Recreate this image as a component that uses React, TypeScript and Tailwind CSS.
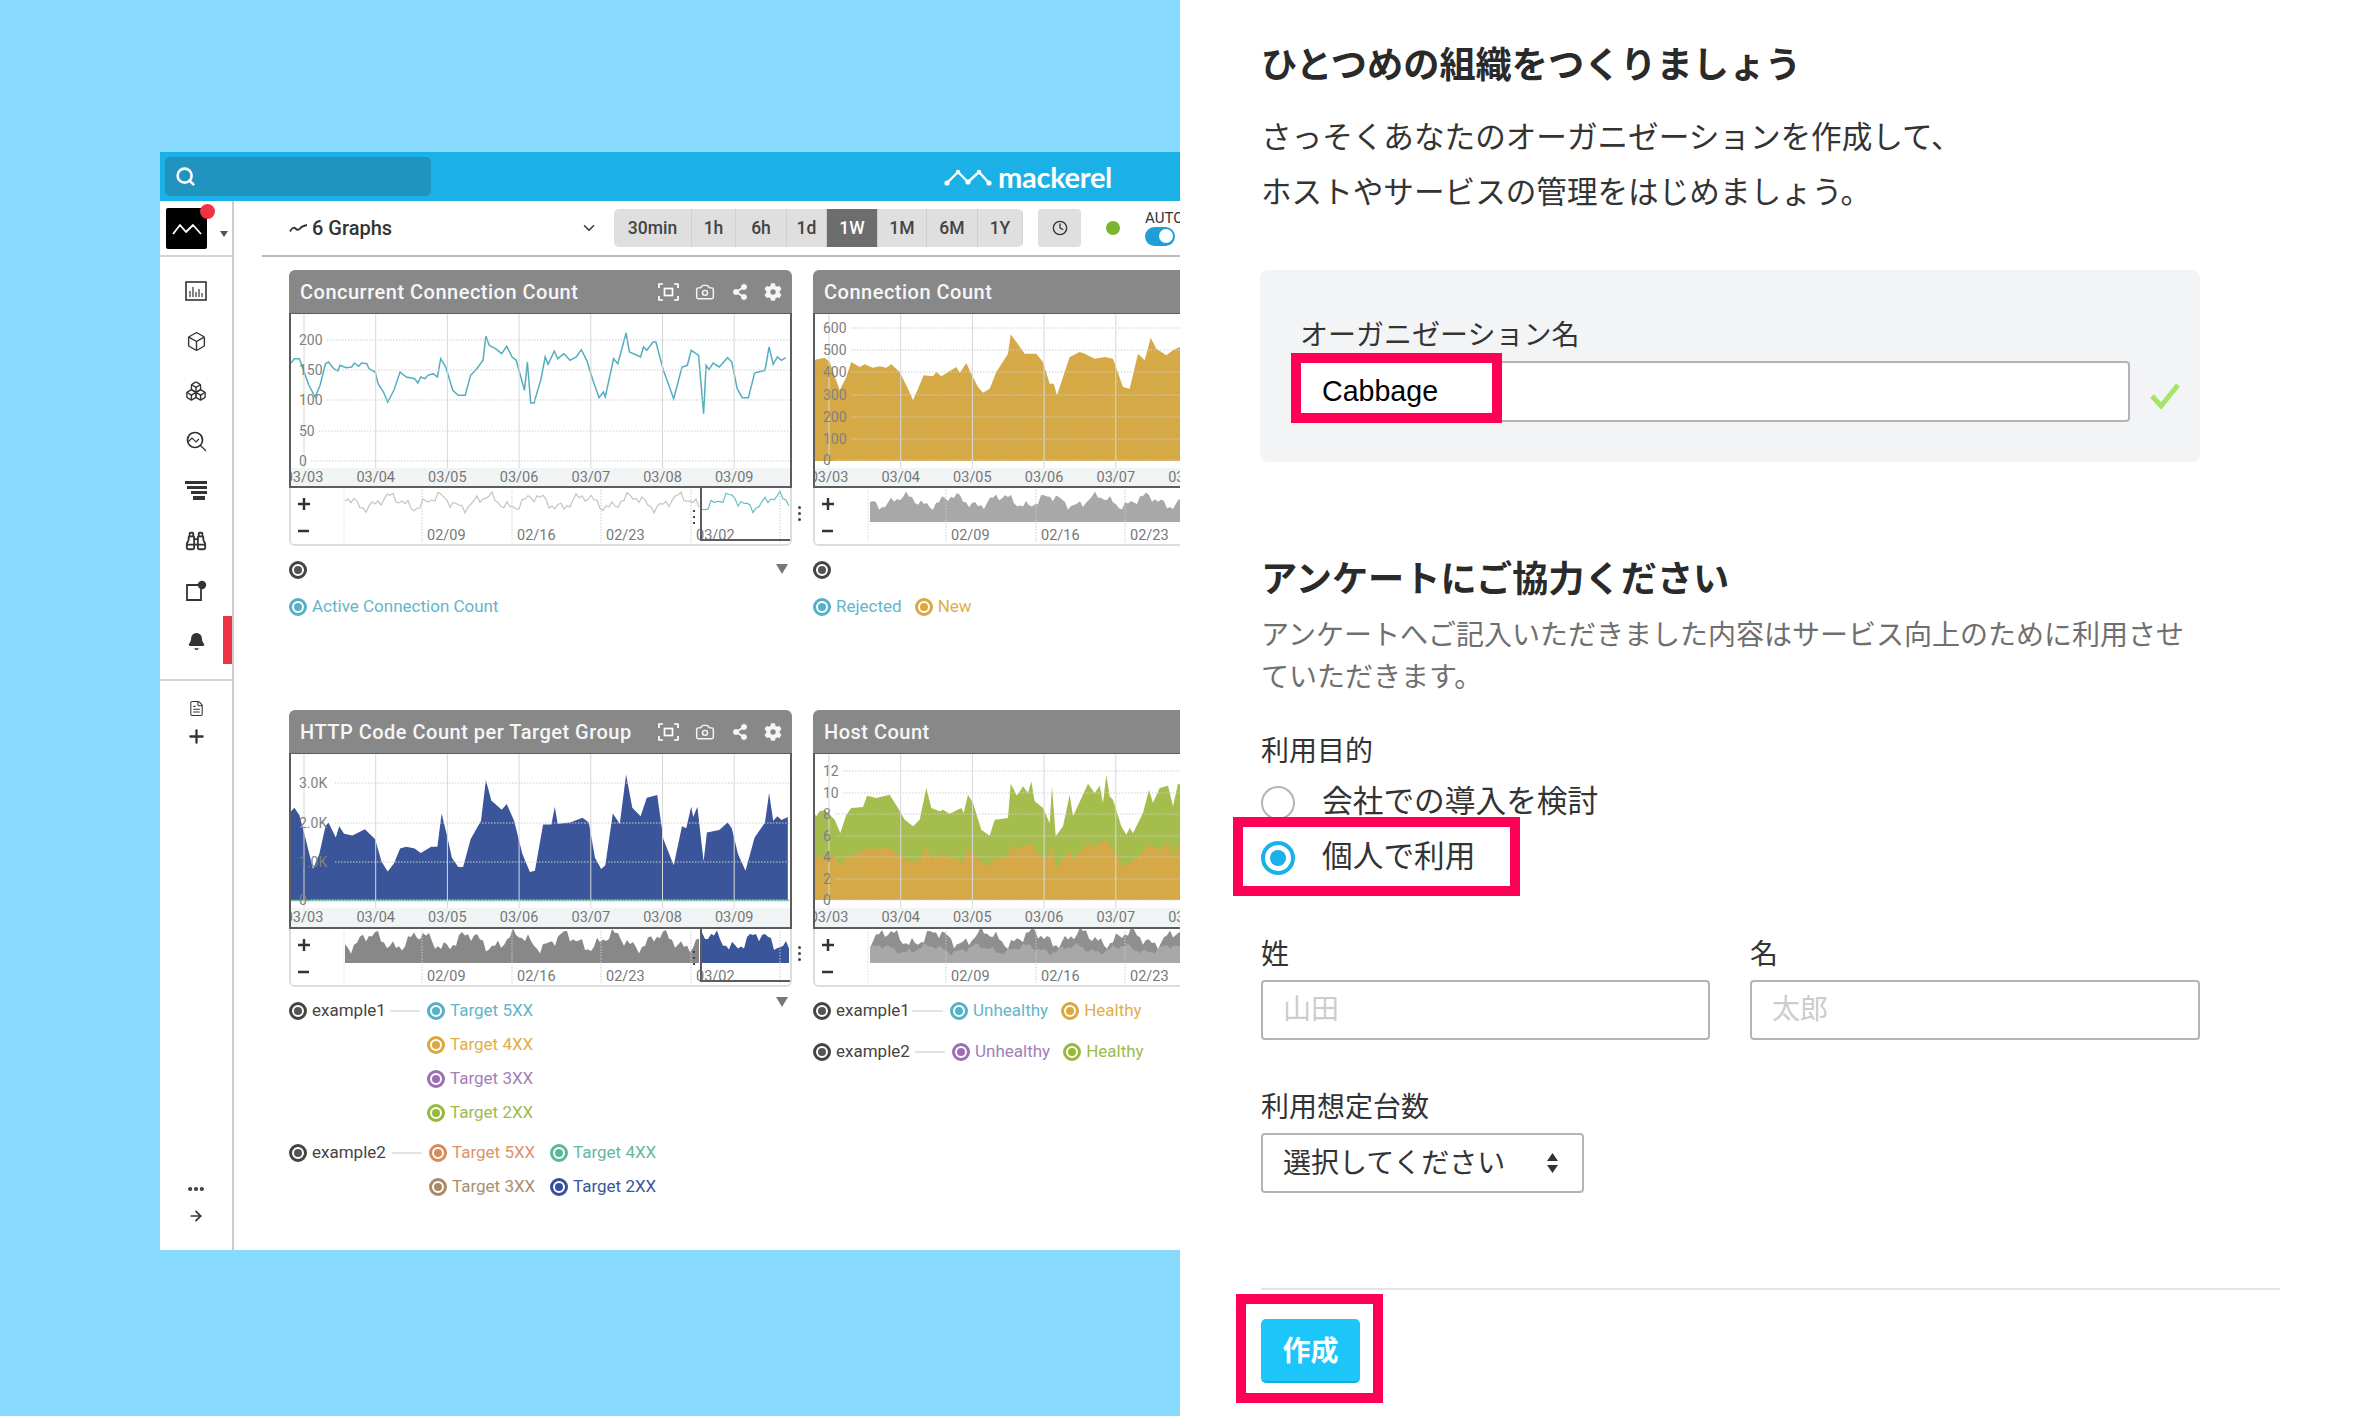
import React from "react";
import { Search, ChevronDown, Clock, Box, Boxes, Binoculars, Bell, FileText, Plus, Ellipsis, ArrowRight, Camera } from "lucide-react";
import { FaCog, FaShareAlt } from "react-icons/fa";

type P = [number, number];
const L = (arr: number[]): P[] => { const o: P[] = []; for (let i = 0; i < arr.length; i += 2) o.push([arr[i], arr[i + 1]]); return o; };

const c1 = L([340,670,350,655,362,655,372,690,385,735,400,770,412,735,425,670,432,665,445,685,455,692,460,675,475,682,488,680,495,668,505,678,512,668,525,670,530,685,545,695,552,730,565,755,575,785,590,750,605,695,620,710,640,715,648,728,655,710,665,715,672,705,685,700,695,710,703,655,715,680,732,750,745,765,762,765,775,705,790,685,805,660,812,588,820,615,835,625,850,640,862,618,875,650,885,660,905,750,912,665,920,788,928,788,945,715,955,650,962,672,977,632,985,655,1000,640,1015,660,1030,650,1042,628,1055,660,1070,720,1085,772,1095,755,1100,770,1120,655,1130,670,1150,578,1158,635,1185,650,1192,620,1200,630,1215,605,1222,605,1240,690,1265,775,1285,680,1298,675,1307,630,1325,645,1337,820,1343,675,1350,688,1360,668,1375,680,1395,652,1405,665,1418,745,1430,772,1445,772,1460,698,1485,690,1495,620,1505,672,1515,650,1525,660,1535,652]);
const c3 = L([337,360,350,345,362,365,375,420,395,510,410,470,425,395,432,385,450,425,458,395,470,415,490,420,520,403,545,430,560,490,575,517,590,495,605,455,620,450,640,455,655,467,680,450,695,450,705,360,718,420,730,480,745,505,757,505,775,430,800,380,812,270,825,325,850,350,862,335,880,380,900,470,918,518,930,515,950,390,970,390,978,342,985,388,1015,385,1045,372,1060,385,1075,480,1090,510,1100,500,1118,360,1135,388,1150,255,1165,345,1185,368,1200,318,1225,310,1240,430,1265,500,1285,395,1295,400,1307,342,1312,370,1322,342,1337,490,1345,412,1375,405,1395,385,1405,400,1420,470,1438,515,1460,425,1485,385,1495,305,1505,380,1515,368,1525,378,1540,370]);
const c2 = L([100,660,120,655,135,652,150,665,180,750,200,710,215,665,240,680,255,672,280,682,300,678,320,682,335,672,360,695,385,745,400,780,415,745,432,705,460,708,470,695,485,708,530,680,540,698,560,668,575,700,595,740,610,757,630,745,650,695,685,640,693,582,710,605,735,640,770,640,790,665,810,730,822,730,832,765,850,710,870,650,900,635,915,640,945,655,975,650,1000,655,1030,740,1050,745,1075,640,1095,660,1113,592,1130,625,1160,645,1180,630,1200,620,1215,622]);
const c4g = L([100,395,110,410,120,395,135,392,165,420,182,460,200,405,215,385,250,382,262,348,290,355,330,345,355,385,375,420,400,440,420,420,440,325,455,385,480,395,490,390,510,402,545,385,552,400,565,345,580,370,605,450,630,468,645,420,685,415,693,312,712,348,730,320,745,340,755,305,765,365,790,385,810,430,817,320,828,470,850,440,870,345,880,410,925,312,945,340,960,318,970,370,980,285,990,350,1000,360,1025,440,1040,465,1050,445,1060,460,1090,400,1108,330,1120,370,1140,325,1165,318,1180,380,1195,312,1215,320]);
const c4o = L([100,535,135,525,165,530,182,558,200,535,260,508,330,505,360,530,400,550,425,535,440,498,455,535,490,525,520,535,550,548,565,505,580,525,625,560,645,540,685,530,693,495,712,510,755,490,770,515,800,540,817,498,830,565,870,510,880,540,925,490,945,505,960,490,980,480,1000,510,1030,560,1060,545,1110,495,1140,510,1165,490,1180,530,1200,490,1215,495]);

const line = (pts: P[], ox: number, sx: number, oy: number, sy: number) =>
  pts.map(([x, y], i) => `${i ? "L" : "M"}${((x - ox) / sx).toFixed(1)} ${((y - oy) / sy).toFixed(1)}`).join(" ");
const area = (pts: P[], ox: number, sx: number, oy: number, sy: number, base: number) => {
  const d = line(pts, ox, sx, oy, sy);
  const last = (pts[pts.length - 1][0] - ox) / sx;
  const first = (pts[0][0] - ox) / sx;
  return `${d} L${last.toFixed(1)} ${base} L${first.toFixed(1)} ${base} Z`;
};

const sparkPts = (seed: number, x0: number, x1: number, base: number, amp: number) => {
  const o: P[] = [];
  for (let x = x0; x <= x1; x += 3) {
    const v = 0.5 + 0.28 * Math.sin(x * 0.13 + seed) + 0.17 * Math.sin(x * 0.37 + seed * 2) + 0.12 * Math.sin(x * 0.83 + seed * 3);
    o.push([x, base - amp * v]);
  }
  return o;
};
const sparkLine = (p: P[]) => p.map(([x, y], i) => `${i ? "L" : "M"}${x} ${y.toFixed(1)}`).join(" ");
const sparkArea = (p: P[], base: number) => `${sparkLine(p)} L${p[p.length - 1][0]} ${base} L${p[0][0]} ${base} Z`;

type YL = [string, number];

function Plot({ children, yl, start, h }: { children: React.ReactNode; yl: YL[]; start: number; h: number }) {
  const dates = ["03/03", "03/04", "03/05", "03/06", "03/07", "03/08", "03/09"];
  const step = 71.7;
  return (
    <svg width="503" height={h} className="block">
      <rect x="0" y="155" width="503" height={h - 155} fill="#f1f4f5" />
      {children}
      {yl.map(([t, y]) => (
        <line key={t} x1={t.length * 8 + 14} x2="503" y1={y} y2={y} stroke="#cfcfcf" strokeWidth="1.2" strokeDasharray="1.5 1.5" />
      ))}
      {dates.map((d, i) => (
        <line key={d} x1={start + i * step} x2={start + i * step} y1="0" y2="155" stroke="#d8d8d8" strokeWidth="1" />
      ))}
      {yl.map(([t, y]) => (
        <text key={t} x="10" y={y + 5} fontSize="14" fill="#808080">{t}</text>
      ))}
      {dates.map((d, i) => (
        <text key={d} x={start + i * step} y="169" fontSize="14.5" fill="#777" textAnchor="middle">{d}</text>
      ))}
      <rect x="1" y="0" width="501" height={h - 1} fill="none" stroke="#5c5c5c" strokeWidth="2" />
    </svg>
  );
}

function Overview({ children, left }: { children: React.ReactNode; left: boolean }) {
  const grid = [133, 223, 312, 402, 491];
  const labs: [string, number][] = [["02/09", 138], ["02/16", 228], ["02/23", 317], ["03/02", 407]];
  return (
    <svg width="503" height="58" className="block rounded-b-md">
      <line x1="55" x2="55" y1="2" y2="54" stroke="#e4e4e4" strokeWidth="1" strokeDasharray="2 1" />
      {children}
      {grid.map((x) => (
        <line key={x} x1={x} x2={x} y1="2" y2="54" stroke="#c9c9c9" strokeWidth="1" strokeDasharray="1.5 1.5" />
      ))}
      {labs.map(([t, x]) => (
        <text key={t} x={x} y="52" fontSize="14.5" fill="#777">{t}</text>
      ))}
      <path d="M9 16H21M15 10V22M9 43H20" stroke="#333" strokeWidth="2.5" fill="none" />
      {left && (
        <>
          <path d="M412 0V52H503" stroke="#5c5c5c" strokeWidth="2" fill="none" />
          <path d="M405 22v2M405 28v2M405 34v2" stroke="#444" strokeWidth="2" />
        </>
      )}
      <path d="M1 0V53Q1 57 5 57H498Q502 57 502 53V0" fill="none" stroke="#dcdcdc" strokeWidth="2" />
    </svg>
  );
}

function FocusIcon() {
  return (
    <svg width="21" height="18" viewBox="0 0 21 18" fill="none" stroke="white" strokeWidth="1.7">
      <path d="M1 5V1H5M16 1H20V5M20 13V17H16M5 17H1V13" />
      <rect x="6.5" y="5.5" width="8" height="7" />
    </svg>
  );
}

function Card({ title, icons, plot, over, dots }: { title: string; icons?: boolean; plot: React.ReactNode; over: React.ReactNode; dots?: boolean }) {
  return (
    <div className="relative w-[503px] shrink-0">
      <div className="flex h-[43px] items-center justify-between rounded-t-md bg-[#888888] pl-[11px] pr-[10px] pt-[1px] text-[20px] font-medium tracking-[0.5px] text-[#f6f6f6]">
        <span>{title}</span>
        {icons && (
          <div className="flex w-[124px] items-center justify-between">
            <FocusIcon />
            <Camera size={20} strokeWidth={1.7} />
            <FaShareAlt size={16} />
            <FaCog size={18} />
          </div>
        )}
      </div>
      {plot}
      {over}
      {dots && (
        <div className="absolute -right-[9px] top-[236px] flex flex-col gap-[3px]">
          <span className="h-[3px] w-[3px] rounded-full bg-[#444]" />
          <span className="h-[3px] w-[3px] rounded-full bg-[#444]" />
          <span className="h-[3px] w-[3px] rounded-full bg-[#444]" />
        </div>
      )}
    </div>
  );
}

const teal = { b: "border-[#55b1c6]", d: "bg-[#55b1c6]", t: "text-[#62b6c9]" };
const orange = { b: "border-[#dca73c]", d: "bg-[#dca73c]", t: "text-[#dfae4c]" };
const purple = { b: "border-[#9c6fb5]", d: "bg-[#9c6fb5]", t: "text-[#a27fb9]" };
const green = { b: "border-[#96b93a]", d: "bg-[#96b93a]", t: "text-[#9dbb4c]" };
const coral = { b: "border-[#d98a58]", d: "bg-[#d98a58]", t: "text-[#dc9468]" };
const mint = { b: "border-[#5ab89a]", d: "bg-[#5ab89a]", t: "text-[#63b99e]" };
const brown = { b: "border-[#a88a68]", d: "bg-[#a88a68]", t: "text-[#a98f70]" };
const navy = { b: "border-[#33509c]", d: "bg-[#33509c]", t: "text-[#3a559f]" };
const dark = { b: "border-[#444444]", d: "bg-[#555555]", t: "text-[#444444]" };
type C = typeof teal;

function Dot({ c }: { c: C }) {
  return (
    <span className={`flex h-[18px] w-[18px] shrink-0 items-center justify-center rounded-full border-[3px] bg-white ${c.b}`}>
      <span className={`h-[8px] w-[8px] rounded-full ${c.d}`} />
    </span>
  );
}
function Item({ c, t }: { c: C; t: string }) {
  return (
    <div className={`flex h-[34px] items-center gap-[5px] whitespace-nowrap text-[17px] ${c.t}`}>
      <Dot c={c} />
      <span>{t}</span>
    </div>
  );
}
const Dash = ({ w }: { w: string }) => <span className={`mt-[16px] h-[2px] shrink-0 bg-[#e3e3e3] ${w}`} />;
const Caret = () => (
  <svg width="12" height="10" viewBox="0 0 12 10" className="ml-auto mr-[4px] mt-[3px] shrink-0"><path d="M0 0H12L6 10Z" fill="#777" /></svg>
);

function SideIcon({ children, mark }: { children: React.ReactNode; mark?: boolean }) {
  return (
    <div className="relative flex h-[50px] items-center justify-center text-[#333]">
      {children}
      {mark && <span className="absolute right-0 top-0 h-[48px] w-[9px] bg-[#ee3344]" />}
    </div>
  );
}

function Sidebar() {
  return (
    <div className="flex w-[74px] shrink-0 flex-col border-r-2 border-[#cccccc]">
      <div className="relative flex h-[56px] items-start border-b-2 border-[#d5d5d5] pl-[6px] pt-[7px]">
        <div className="flex h-[41px] w-[41px] items-center justify-center rounded-[2px] bg-black">
          <svg width="30" height="14" viewBox="0 0 30 14" fill="none" stroke="white" strokeWidth="1.8" strokeLinejoin="round"><path d="M1 12L8 3L14 10L21 3L29 12" /></svg>
        </div>
        <span className="absolute left-[40px] top-[3px] h-[15px] w-[15px] rounded-full bg-[#ee3344]" />
        <svg width="8" height="6" viewBox="0 0 8 6" className="ml-[13px] mt-[23px]"><path d="M0 0H8L4 6Z" fill="#555" /></svg>
      </div>
      <div className="flex h-[424px] flex-col border-b-2 border-[#d5d5d5] pt-[9px]">
        <SideIcon>
          <svg width="22" height="20" viewBox="0 0 22 20" fill="none" stroke="#333"><rect x="1" y="1" width="20" height="18" strokeWidth="1.6" /><path d="M5 16V10M8 16V6M11 16V11M14 16V8M17 16V12" strokeWidth="1.2" /></svg>
        </SideIcon>
        <SideIcon><Box size={21} strokeWidth={1.6} /></SideIcon>
        <SideIcon><Boxes size={22} strokeWidth={1.5} /></SideIcon>
        <SideIcon>
          <svg width="22" height="22" viewBox="0 0 22 22" fill="none" stroke="#333" strokeWidth="1.7"><circle cx="10" cy="10" r="7.5" /><path d="M15.5 15.5L21 21M3 12L7 8L11 12L14 9" strokeWidth="1.2" /></svg>
        </SideIcon>
        <SideIcon>
          <svg width="22" height="20" viewBox="0 0 22 20" fill="#333"><rect x="0" y="0" width="22" height="3" /><rect x="2" y="5" width="20" height="3" /><rect x="6" y="10" width="16" height="3" /><rect x="8" y="15" width="12" height="4" /></svg>
        </SideIcon>
        <SideIcon><Binoculars size={22} strokeWidth={2} /></SideIcon>
        <SideIcon>
          <svg width="22" height="22" viewBox="0 0 22 22" fill="none"><path d="M13 5H2V20H16V9" stroke="#333" strokeWidth="1.8" /><circle cx="17" cy="5" r="4.2" fill="#333" /></svg>
        </SideIcon>
        <SideIcon mark><Bell size={19} fill="#333" strokeWidth={1.5} /></SideIcon>
      </div>
      <div className="flex flex-1 flex-col items-center text-[#333]">
        <div className="mt-[19px]"><FileText size={17} strokeWidth={1.5} /></div>
        <div className="mt-[9px]"><Plus size={21} strokeWidth={2.6} /></div>
        <div className="mt-auto"><Ellipsis size={20} strokeWidth={3} /></div>
        <div className="mb-[26px] mt-[9px]"><ArrowRight size={16} strokeWidth={2.6} /></div>
      </div>
    </div>
  );
}

function Toolbar() {
  const seg: [string, string][] = [["30min", "w-[78px]"], ["1h", "w-[44px]"], ["6h", "w-[51px]"], ["1d", "w-[40px]"], ["1W", "w-[51px]"], ["1M", "w-[49px]"], ["6M", "w-[51px]"], ["1Y", "w-[45px]"]];
  return (
    <div className="ml-[28px] flex h-[56px] items-center whitespace-nowrap border-b-2 border-[#bbbbbb]">
      <div className="flex w-[352px] shrink-0 items-center pl-[27px] pr-[16px]">
        <svg width="19" height="10" viewBox="0 0 19 10" fill="none" stroke="#333" strokeWidth="1.8"><path d="M1 8.5Q4 3 6.5 5.5T11 5.5T18 2" /></svg>
        <span className="ml-[4px] text-[20px] font-medium text-[#333]">6 Graphs</span>
        <ChevronDown size={18} strokeWidth={2} className="ml-auto text-[#333]" />
      </div>
      <div className="flex h-[38px] shrink-0 overflow-hidden rounded-[5px] bg-[#dfdfdf] text-[17.5px] font-medium text-[#444]">
        {seg.map(([t, w]) => (
          <div key={t} className={`flex items-center justify-center border-r border-[#cfcfcf] ${w} ${t === "1W" ? "bg-[#6d6d6d] text-white" : ""}`}>{t}</div>
        ))}
      </div>
      <div className="ml-[15px] flex h-[38px] w-[43px] shrink-0 items-center justify-center rounded-[4px] bg-[#dfdfdf] text-[#333]">
        <Clock size={16} strokeWidth={2} />
      </div>
      <span className="ml-[25px] h-[14px] w-[14px] shrink-0 rounded-full bg-[#7ab52f]" />
      <div className="ml-[25px] flex shrink-0 flex-col items-start">
        <span className="text-[15px] leading-[15px] text-[#333]">AUTO</span>
        <span className="mt-[1px] flex h-[19px] w-[30px] items-center justify-end rounded-full bg-[#1f9fd6] pr-[2px]">
          <span className="h-[14px] w-[14px] rounded-full bg-white" />
        </span>
      </div>
    </div>
  );
}

function Dashboard() {
  const s1 = sparkPts(1, 56, 502, 24, 20);
  const s2 = sparkPts(2.2, 57, 503, 22, 18);
  const s3 = sparkPts(3.4, 56, 502, 24, 24);
  const s4a = sparkPts(4.4, 57, 503, 20, 22);
  const s4b = sparkPts(5.3, 57, 503, 26, 12);
  return (
    <div className="flex h-[1098px] w-[1020px] flex-col overflow-hidden bg-white [font-family:Roboto,sans-serif]">
      <div className="flex h-[49px] shrink-0 items-center justify-between bg-[#1cb1e6] pl-[5px] pr-[68px]">
        <div className="flex h-[39px] w-[266px] items-center rounded-[5px] bg-[#2193bf] pl-[10px]">
          <Search size={21} strokeWidth={3} className="text-white" />
        </div>
        <div className="flex items-center gap-[6px] text-white">
          <svg width="48" height="18" viewBox="0 0 48 18" fill="none" stroke="white" strokeWidth="2.4" strokeLinejoin="round">
            <path d="M3 15L14 4L24 14L35 4L45 15" />
            <circle cx="3" cy="15" r="2.6" fill="white" stroke="none" /><circle cx="45" cy="15" r="2.6" fill="white" stroke="none" /><circle cx="24" cy="14" r="2.6" fill="white" stroke="none" /><circle cx="14" cy="4" r="2.2" fill="white" stroke="none" /><circle cx="35" cy="4" r="2.2" fill="white" stroke="none" />
          </svg>
          <span className="text-[29px] font-bold leading-none tracking-[-0.3px] [font-family:Lato,sans-serif]">mackerel</span>
        </div>
      </div>
      <div className="flex min-h-0 flex-1">
        <Sidebar />
        <div className="min-w-0 flex-1 overflow-hidden">
          <Toolbar />
          <div className="grid w-[1100px] grid-cols-[503px_503px] grid-rows-[440px_auto] gap-x-[21px] pl-[55px] pt-[13px]">
            <div>
              <Card
                title="Concurrent Connection Count"
                icons
                dots
                plot={
                  <Plot yl={[["200", 27], ["150", 57], ["100", 87], ["50", 118], ["0", 148]]} start={15} h={175}>
                    <path d={line(c1, 337, 2.412, 518, 3)} fill="none" stroke="#55aebf" strokeWidth="1.5" />
                  </Plot>
                }
                over={
                  <Overview left>
                    <path d={sparkLine(s1.filter((p) => p[0] <= 412))} fill="none" stroke="#c4c4c4" strokeWidth="1.2" />
                    <path d={sparkLine(s1.filter((p) => p[0] >= 412))} fill="none" stroke="#6cbccd" strokeWidth="1.2" />
                  </Overview>
                }
              />
              <div className="mt-[15px] flex items-start"><Dot c={dark} /><Caret /></div>
              <div className="mt-[19px]"><div className="-my-[8px]"><Item c={teal} t="Active Connection Count" /></div></div>
            </div>
            <div>
              <Card
                title="Connection Count"
                plot={
                  <Plot yl={[["600", 15], ["500", 37], ["400", 59], ["300", 82], ["200", 104], ["100", 126], ["0", 147]]} start={16} h={175}>
                    <path d={area(c2, 100, 3, 518, 3, 148)} fill="#d6a947" />
                  </Plot>
                }
                over={
                  <Overview left={false}>
                    <path d={sparkArea(s2, 34)} fill="#a8a8a8" />
                  </Overview>
                }
              />
              <div className="mt-[15px] flex items-start"><Dot c={dark} /></div>
              <div className="mt-[19px] flex gap-[13px]">
                <div className="-my-[8px]"><Item c={teal} t="Rejected" /></div>
                <div className="-my-[8px]"><Item c={orange} t="New" /></div>
              </div>
            </div>
            <div>
              <Card
                title="HTTP Code Count per Target Group"
                icons
                dots
                plot={
                  <Plot yl={[["3.0K", 30], ["2.0K", 70], ["1.0K", 109], ["0", 147]]} start={15} h={176}>
                    <path d={area(c3, 337, 2.412, 197, 2.7, 147)} fill="#3a5599" />
                    <line x1="2" x2="500" y1="147.5" y2="147.5" stroke="#6cc39f" strokeWidth="1.5" />
                  </Plot>
                }
                over={
                  <Overview left>
                    <path d={sparkArea(s3.filter((p) => p[0] <= 412), 34)} fill="#888888" />
                    <path d={sparkArea(s3.filter((p) => p[0] >= 412), 34)} fill="#3a5599" />
                  </Overview>
                }
              />
              <div className="mt-[7px] flex items-start">
                <div className="flex h-[34px] w-[101px] shrink-0 items-center gap-[5px] text-[17px] text-[#444]"><Dot c={dark} />example1</div>
                <Dash w="w-[30px]" />
                <div className="ml-[7px]">
                  <Item c={teal} t="Target 5XX" />
                  <Item c={orange} t="Target 4XX" />
                  <Item c={purple} t="Target 3XX" />
                  <Item c={green} t="Target 2XX" />
                </div>
                <Caret />
              </div>
              <div className="mt-[6px] flex items-start">
                <div className="flex h-[34px] w-[103px] shrink-0 items-center gap-[5px] text-[17px] text-[#444]"><Dot c={dark} />example2</div>
                <Dash w="w-[30px]" />
                <div className="ml-[7px] grid grid-cols-[121px_auto]">
                  <Item c={coral} t="Target 5XX" />
                  <Item c={mint} t="Target 4XX" />
                  <Item c={brown} t="Target 3XX" />
                  <Item c={navy} t="Target 2XX" />
                </div>
              </div>
            </div>
            <div>
              <Card
                title="Host Count"
                plot={
                  <Plot yl={[["12", 18], ["10", 40], ["8", 61], ["6", 83], ["4", 104], ["2", 126], ["0", 147]]} start={16} h={176}>
                    <path d={area(c4g, 100, 3, 220, 3, 147)} fill="#a4bd4c" />
                    <path d={area(c4o, 100, 3, 220, 3, 147)} fill="#d6a947" />
                  </Plot>
                }
                over={
                  <Overview left={false}>
                    <path d={sparkArea(s4a, 34)} fill="#8f8f8f" />
                    <path d={sparkArea(s4b, 34)} fill="#a8a8a8" />
                  </Overview>
                }
              />
              <div className="mt-[7px] flex items-start">
                <div className="flex h-[34px] w-[99px] shrink-0 items-center gap-[5px] text-[17px] text-[#444]"><Dot c={dark} />example1</div>
                <Dash w="w-[31px]" />
                <div className="ml-[7px] flex gap-[13px]"><Item c={teal} t="Unhealthy" /><Item c={orange} t="Healthy" /></div>
              </div>
              <div className="mt-[7px] flex items-start">
                <div className="flex h-[34px] w-[102px] shrink-0 items-center gap-[5px] text-[17px] text-[#444]"><Dot c={dark} />example2</div>
                <Dash w="w-[30px]" />
                <div className="ml-[7px] flex gap-[13px]"><Item c={purple} t="Unhealthy" /><Item c={green} t="Healthy" /></div>
              </div>
            </div>
          </div>
        </div>
      </div>
    </div>
  );
}

function Field({ ph, w }: { ph: string; w: string }) {
  return (
    <input readOnly placeholder={ph} className={`h-[60px] rounded-[4px] border-2 border-[#b4b4b6] bg-white px-[20px] text-[28px] outline-none placeholder:text-[#cccccc] ${w}`} />
  );
}

function Pink({ cls }: { cls: string }) {
  return <div className={`pointer-events-none absolute border-[10px] border-[#ff0055] ${cls}`} />;
}

function RightPanel() {
  return (
    <div className="relative h-[1416px] min-w-0 flex-1 overflow-hidden bg-white pl-[81px] text-[#222] [font-family:'Liberation_Sans','Noto_Sans_CJK_JP',sans-serif]">
      <h1 className="mt-[41px] text-[36.2px] font-bold leading-[50px] text-[#2a2a2a]">ひとつめの組織をつくりましょう</h1>
      <p className="mt-[19px] text-[30.6px] leading-[55px] text-[#333]">さっそくあなたのオーガニゼーションを作成して、<br />ホストやサービスの管理をはじめましょう。</p>
      <div className="-ml-px mt-[50px] flex h-[192px] w-[940px] items-start rounded-[8px] bg-[#f3f4f6] pl-[34px] pt-[46px]">
        <div>
          <div className="pl-[6px] text-[28px] leading-[40px] text-[#333]">オーガニゼーション名</div>
          <input readOnly value="Cabbage" className="mt-[5px] h-[61px] w-[836px] rounded-[4px] border-2 border-[#b4b4b6] bg-white pl-[26px] text-[28.6px] text-black outline-none" />
        </div>
        <svg width="30" height="26" viewBox="0 0 30 26" className="ml-[20px] mt-[67px]" fill="none" stroke="#a6e56a" strokeWidth="5"><path d="M2 13L11 23L28 2" /></svg>
      </div>
      <h2 className="mt-[93px] text-[36.2px] font-bold leading-[50px] text-[#2a2a2a]">アンケートにご協力ください</h2>
      <p className="mt-[10px] w-[940px] text-[28px] leading-[42px] text-[#6f6f6f]">アンケートへご記入いただきました内容はサービス向上のために利用させ<br />ていただきます。</p>
      <div className="mt-[33px] text-[28px] leading-[40px] text-[#333]">利用目的</div>
      <div className="mt-[3px] flex h-[55px] items-center gap-[27px] text-[30.7px] text-[#333]">
        <span className="h-[34px] w-[34px] rounded-full border-2 border-[#b4b4b6] bg-white" />
        会社での導入を検討
      </div>
      <div className="flex h-[55px] items-center gap-[27px] text-[30.7px] text-[#333]">
        <span className="flex h-[34px] w-[34px] items-center justify-center rounded-full border-[4px] border-[#18b1ea] bg-white">
          <span className="h-[16px] w-[16px] rounded-full bg-[#18b1ea]" />
        </span>
        個人で利用
      </div>
      <div className="mt-[50px] flex w-[938px] gap-[40px]">
        <div>
          <div className="text-[28px] leading-[40px] text-[#333]">姓</div>
          <div className="mt-[5px] flex"><Field ph="山田" w="w-[449px]" /></div>
        </div>
        <div>
          <div className="text-[28px] leading-[40px] text-[#333]">名</div>
          <div className="mt-[5px] flex"><Field ph="太郎" w="w-[450px]" /></div>
        </div>
      </div>
      <div className="mt-[48px] text-[28px] leading-[40px] text-[#333]">利用想定台数</div>
      <div className="mt-[5px] flex h-[60px] w-[323px] items-center justify-between rounded-[4px] border-2 border-[#b4b4b6] pl-[20px] pr-[24px] text-[28px] text-[#333]">
        <span className="pt-[1px]">選択してください</span>
        <svg width="11" height="20" viewBox="0 0 11 20" fill="#333"><path d="M5.5 0L11 8H0ZM5.5 20L0 12H11Z" /></svg>
      </div>
      <div className="mt-[95px] h-[2px] w-[1019px] bg-[#e5e5e5]" />
      <button className="mt-[29px] flex h-[64px] w-[99px] items-center justify-center rounded-[5px] border-b-2 border-[#14aee0] bg-[#1cc6fb] pt-[3px] text-[28px] font-bold text-white">作成</button>
      <Pink cls="left-[111px] top-[353px] h-[70px] w-[211px]" />
      <Pink cls="left-[53px] top-[817px] h-[79px] w-[287px]" />
      <Pink cls="left-[56px] top-[1294px] h-[109px] w-[147px]" />
    </div>
  );
}

export default function App() {
  return (
    <div className="flex h-[1416px] w-[2360px] overflow-hidden bg-white">
      <div className="h-[1416px] w-[1180px] shrink-0 bg-[#88daff] pl-[160px] pt-[152px]">
        <Dashboard />
      </div>
      <RightPanel />
    </div>
  );
}
